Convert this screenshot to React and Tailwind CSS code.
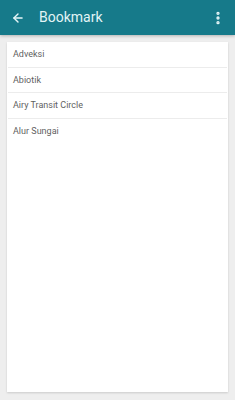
import { ArrowLeft, EllipsisVertical } from "lucide-react";

const words = ["Adveksi", "Abiotik", "Airy Transit Circle", "Alur Sungai"];

export default function App() {
  return (
    <div
      className="w-[235px] h-[400px] bg-[#eeeeee] flex flex-col overflow-hidden"
      style={{ fontFamily: "Roboto, 'Liberation Sans', sans-serif" }}
    >
      {/* Toolbar */}
      <div className="h-[35px] shrink-0 bg-[#167a8a] flex items-center pl-[11px] pr-[9px] shadow-[0_1px_3px_rgba(0,0,0,0.25)]">
        <ArrowLeft size={14} strokeWidth={2.4} className="text-[#e6f6f8]" />
        <span className="ml-[14px] text-[14px] text-[#e2f4f6]">Bookmark</span>
        <EllipsisVertical size={16} strokeWidth={3} className="text-[#e6f6f8] ml-auto" />
      </div>

      {/* List card */}
      <div className="mx-[7px] mt-[7px] mb-[8px] flex-1 bg-white shadow-[0_1px_2px_rgba(0,0,0,0.15)]">
        {words.map((w, i) => (
          <div
            key={w}
            className={
              "h-[25.5px] mx-[1px] flex items-center pl-[5px] text-[9px] text-[#5f5f5f] pt-[1px] " +
              (i < words.length - 1 ? "border-b border-[#ececec]" : "")
            }
          >
            {w}
          </div>
        ))}
      </div>
    </div>
  );
}
